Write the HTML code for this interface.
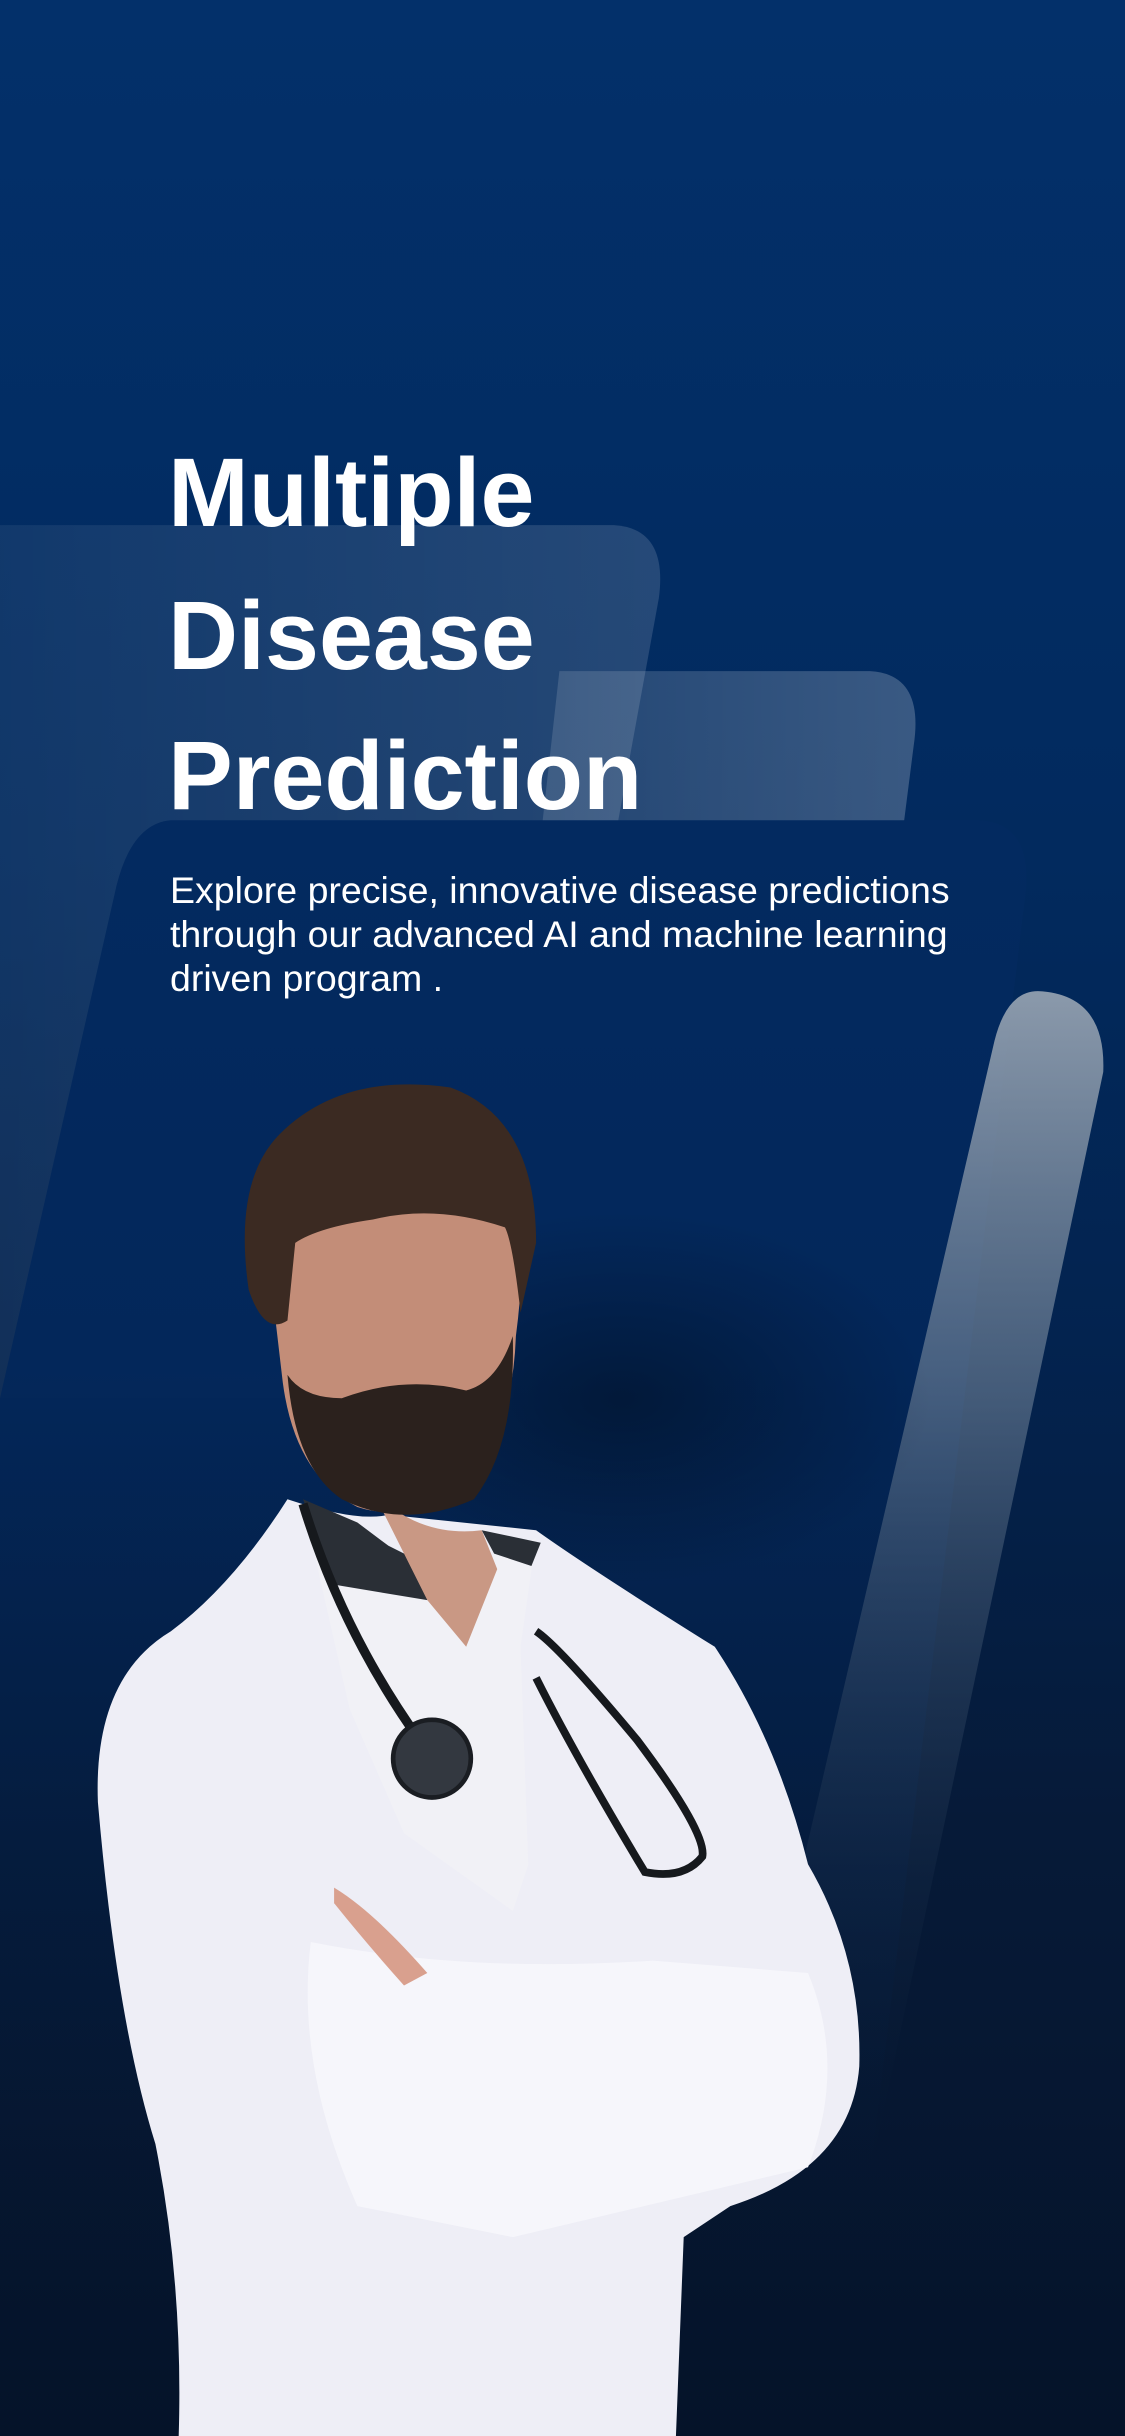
<!DOCTYPE html>
<html><head><meta charset="utf-8"><style>
html,body{margin:0;padding:0}
body{width:1125px;height:2436px;position:relative;overflow:hidden;background:linear-gradient(180deg,#03306a 0%,#022a5e 35%,#03234f 55%,#061a38 75%,#051329 100%);font-family:"Liberation Sans",sans-serif}
svg{position:absolute;left:0;top:0}
.t{position:absolute;left:168px;color:#fff;font-weight:bold;font-size:97px;line-height:1}
.s{position:absolute;left:170px;top:868px;color:#fff;font-size:37.5px;line-height:44px;width:820px}
</style></head><body>
<svg width="1125" height="2436" viewBox="0 0 724 1568" preserveAspectRatio="none">
<defs>
<linearGradient id="p1" x1="0" y1="0" x2="1" y2="0"><stop offset="0" stop-color="#fff" stop-opacity=".06"/><stop offset="1" stop-color="#fff" stop-opacity=".14"/></linearGradient>
<linearGradient id="p2" x1="0" y1="0" x2="1" y2="0"><stop offset="0" stop-color="#fff" stop-opacity=".12"/><stop offset="1" stop-color="#fff" stop-opacity=".22"/></linearGradient>
<linearGradient id="st" x1="0" y1="0" x2="0" y2="1"><stop offset="0" stop-color="#9aa6b4" stop-opacity=".9"/><stop offset=".35" stop-color="#6c7f95" stop-opacity=".6"/><stop offset=".75" stop-color="#203550" stop-opacity=".25"/><stop offset="1" stop-color="#0a1a30" stop-opacity="0"/></linearGradient>
<linearGradient id="dk" x1="0" y1="0" x2="0" y2="1"><stop offset="0" stop-color="#032a60"/><stop offset=".4" stop-color="#03275a"/><stop offset="1" stop-color="#041a3a" stop-opacity="0"/></linearGradient>
<radialGradient id="sh" cx=".5" cy=".5" r=".5"><stop offset="0" stop-color="#000" stop-opacity=".35"/><stop offset="1" stop-color="#000" stop-opacity="0"/></radialGradient>
</defs>
<path d="M0 338 H395 Q430 340 424 385 L330 900 L0 900 Z" fill="url(#p1)"/>
<path d="M360 432 H560 Q595 434 588 480 L560 700 L330 700 Z" fill="url(#p2)"/>
<path d="M110 528 H630 Q665 530 660 575 L560 1400 L0 1400 L0 900 L75 570 Q85 530 110 528 Z" fill="url(#dk)"/>
<path d="M668 638 Q712 640 710 690 L560 1400 L470 1400 L640 670 Q648 638 668 638 Z" fill="url(#st)"/>
<ellipse cx="400" cy="900" rx="200" ry="120" fill="url(#sh)"/>
<path d="M185 965 Q230 980 250 975 L345 985 Q380 1010 460 1060 Q500 1120 520 1200 Q555 1260 553 1330 Q548 1395 470 1420 L440 1440 L435 1568 L115 1568 Q118 1470 100 1380 Q75 1300 63 1160 Q60 1080 110 1050 Q150 1020 185 965 Z" fill="#eeeef6"/>
<path d="M200 1250 Q300 1270 420 1262 L520 1270 Q545 1330 520 1395 L330 1440 L230 1420 Q190 1330 200 1250 Z" fill="#f6f6fb"/>
<path d="M195 968 L240 1000 L300 1030 L318 1000 L345 990 L335 1060 L340 1200 L330 1230 L260 1180 L225 1100 Z" fill="#f1f1f6"/>
<path d="M195 965 L215 1020 L275 1030 L280 1010 L250 995 L230 980 Z" fill="#2a2f36"/>
<path d="M310 985 L348 993 L342 1008 L318 1000 Z" fill="#2a2f36"/>
<path d="M240 960 Q270 990 310 985 L320 1010 L300 1060 L275 1030 Z" fill="#c99884"/>
<path d="M215 1215 Q240 1230 275 1270 L260 1278 Q235 1250 215 1225 Z" fill="#d9a08e"/>
<path d="M195 968 Q220 1050 270 1120" stroke="#16191d" stroke-width="6" fill="none"/>
<path d="M345 1050 Q360 1060 410 1120 Q455 1180 452 1195 Q440 1210 415 1205 Q370 1130 345 1080" stroke="#16191d" stroke-width="5" fill="none"/>
<circle cx="278" cy="1132" r="25" fill="#333840" stroke="#1a1d22" stroke-width="3"/>
<path d="M175 830 Q170 780 180 765 L330 760 Q340 800 332 860 Q330 920 300 960 Q260 980 230 970 Q190 950 182 890 Z" fill="#c38d78"/>
<path d="M185 885 Q195 900 220 900 Q260 885 300 895 Q320 890 330 860 Q332 930 305 965 Q260 985 220 965 Q190 945 185 885 Z" fill="#2b211d"/>
<path d="M160 830 Q150 760 180 730 Q220 690 290 700 Q345 720 345 800 L335 845 Q330 800 325 790 Q280 775 240 785 Q205 790 190 800 L185 850 Q170 860 160 830 Z" fill="#3b2a22"/>
</svg>
<div class="t" style="top:444px">Multiple</div>
<div class="t" style="top:587px">Disease</div>
<div class="t" style="top:727px">Prediction</div>
<div class="s">Explore precise, innovative disease predictions through our advanced AI and machine learning driven program .</div>
</body></html>
